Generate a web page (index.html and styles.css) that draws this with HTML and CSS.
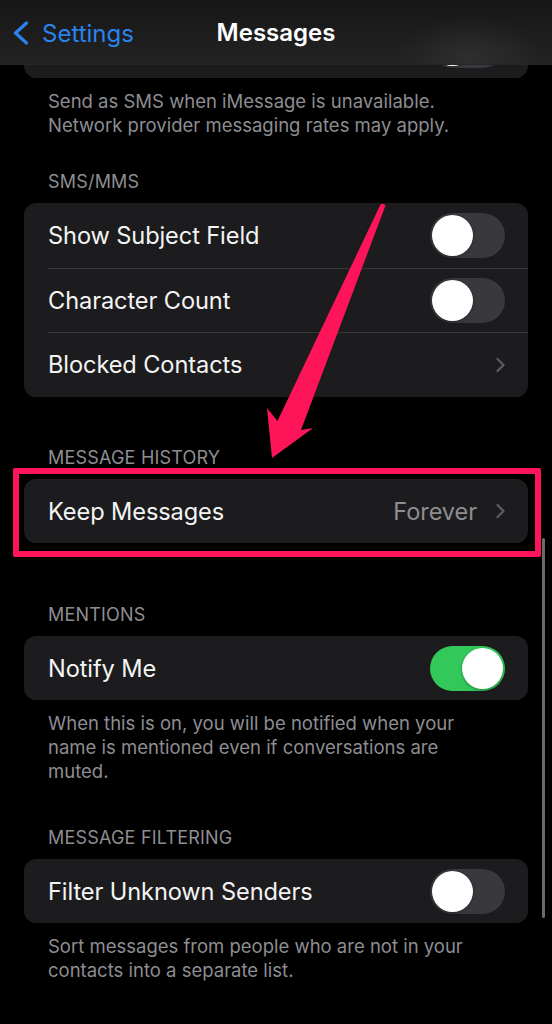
FILE: index.html
```html
<!DOCTYPE html>
<html lang="en">
<head>
<meta charset="utf-8">
<title>Messages</title>
<link rel="stylesheet" href="styles.css">
</head>
<body>
<div class="screen">
  <header class="nav">
    <div class="back">
      <svg class="back-icon" width="17" height="24" viewBox="0 0 17 24"><path d="M14.5 2 L3.5 12 L14.5 22" fill="none" stroke="#2a84f0" stroke-width="3.2" stroke-linecap="round" stroke-linejoin="round"/></svg>
      <span class="back-label">Settings</span>
    </div>
    <div class="title">Messages</div>
    <div></div>
  </header>

  <main class="content">
    <section class="group group-top">
      <div class="card">
        <div class="row"><span class="label"></span><span class="toggle"></span></div>
      </div>
      <p class="footer">Send as SMS when iMessage is unavailable.<br>Network provider messaging rates may apply.</p>
    </section>

    <section class="group group-sms">
      <h2 class="header">SMS/MMS</h2>
      <div class="card">
        <div class="row"><span class="label">Show Subject Field</span><span class="toggle"></span></div>
        <div class="row row-mid"><span class="label">Character Count</span><span class="toggle"></span></div>
        <div class="row"><span class="label">Blocked Contacts</span><svg class="chev" width="11" height="16" viewBox="0 0 11 16"><path d="M2.5 2 L8.5 8 L2.5 14" fill="none" stroke="#5b5b60" stroke-width="2.3" stroke-linecap="round" stroke-linejoin="round"/></svg></div>
      </div>
    </section>

    <section class="group group-history">
      <h2 class="header">Message History</h2>
      <div class="highlight">
        <div class="card">
          <div class="row row-short"><span class="label">Keep Messages</span><span class="value">Forever</span><svg class="chev" width="11" height="16" viewBox="0 0 11 16"><path d="M2.5 2 L8.5 8 L2.5 14" fill="none" stroke="#5b5b60" stroke-width="2.3" stroke-linecap="round" stroke-linejoin="round"/></svg></div>
        </div>
      </div>
    </section>

    <section class="group group-mentions">
      <h2 class="header">Mentions</h2>
      <div class="card">
        <div class="row row-short"><span class="label">Notify Me</span><span class="toggle on"></span></div>
      </div>
      <p class="footer">When this is on, you will be notified when your name is mentioned even if conversations are muted.</p>
    </section>

    <section class="group group-filter">
      <h2 class="header">Message Filtering</h2>
      <div class="card">
        <div class="row row-short"><span class="label">Filter Unknown Senders</span><span class="toggle"></span></div>
      </div>
      <p class="footer">Sort messages from people who are not in your contacts into a separate list.</p>
    </section>
  </main>

  <svg class="arrow" width="552" height="1024" viewBox="0 0 552 1024">
    <path d="M380.5 204.5 Q383 202.5 385.5 205.5 L301 430 L313 428 L272 458 L267 408 L277.5 421 Z" fill="#fe1459"/>
  </svg>
  <div class="scrollbar"></div>
</div>
</body>
</html>
```

FILE: styles.css
```css
* { box-sizing: border-box; }

body {
  margin: 0;
  background: #000;
  font-family: Inter, "Noto Sans", "Liberation Sans", sans-serif;
  -webkit-font-smoothing: antialiased;
}

.screen {
  position: relative;
  width: 552px;
  height: 1024px;
  overflow: hidden;
  background: #000;
}

/* Navigation bar overlays the scrolled content */
.nav {
  position: absolute;
  top: 0;
  left: 0;
  right: 0;
  height: 65px;
  z-index: 2;
  display: grid;
  grid-template-columns: 1fr auto 1fr;
  align-items: center;
  background:
    radial-gradient(ellipse 70px 40px at 470px 55px, rgba(70,70,70,0.35), rgba(70,70,70,0) 100%),
    linear-gradient(#161616, #232323);
  border-bottom: 1px solid #262626;
}

.back {
  display: flex;
  align-items: center;
  gap: 13px;
  padding-left: 12px;
  padding-top: 2px;
}

.back-icon { display: block; }

.back-label {
  color: #2a84f0;
  font-size: 24px;
  letter-spacing: 0;
}

.title {
  color: #fff;
  font-size: 24px;
  font-weight: 600;
  padding-top: 1px;
}

.content {
  padding: 13px 24px 0;
}

.group { margin: 0; }

.header {
  margin: 0 0 11px;
  padding: 2px 0 0 24px;
  font-size: 18px;
  line-height: 20px;
  font-weight: 400;
  color: #8d8d92;
  text-transform: uppercase;
  letter-spacing: 0.2px;
}

.group-sms { margin-top: 33px; }
.group-history { margin-top: 49px; }
.group-mentions { margin-top: 60px; }
.group-filter { margin-top: 43px; }

.card {
  background: #1c1c1e;
  border-radius: 12px;
}

.row {
  height: 65px;
  display: flex;
  align-items: center;
  padding: 0 23px 0 24px;
}

.row-mid { height: 64px; }
.row-short { height: 64px; }

.row + .row {
  background: linear-gradient(#38383a, #38383a) 24px 0 / calc(100% - 24px) 1px no-repeat;
}

.label {
  flex: 1;
  color: #f4f4f4;
  font-size: 23.6px;
  letter-spacing: -0.1px;
}

.value {
  color: #8d8d92;
  font-size: 23.6px;
  letter-spacing: -0.1px;
  margin-right: 18px;
}

.chev { display: block; margin-right: -1px; }

.toggle {
  width: 75px;
  height: 45px;
  border-radius: 23px;
  background: #39393d;
  display: flex;
  align-items: center;
  padding: 2px;
}

.toggle::after {
  content: "";
  width: 41px;
  height: 41px;
  border-radius: 50%;
  background: #fff;
  box-shadow: 0 1px 3px rgba(0,0,0,0.35);
}

.toggle.on {
  background: #32c85a;
  justify-content: flex-end;
}

.footer {
  margin: 0;
  padding: 11px 40px 0 24px;
  font-size: 18.5px;
  line-height: 24px;
  color: #8d8d92;
}

/* annotation box around Keep Messages */
.highlight { position: relative; }
.highlight::after {
  content: "";
  position: absolute;
  top: -11px;
  left: -11px;
  right: -13px;
  bottom: -14px;
  border: 6px solid #fe1459;
  border-radius: 2px;
}

.arrow {
  position: absolute;
  top: 0;
  left: 0;
  z-index: 3;
  pointer-events: none;
}

.scrollbar {
  position: absolute;
  left: 542px;
  top: 538px;
  width: 3px;
  height: 380px;
  border-radius: 2px;
  background: #6a6a6a;
}
```
